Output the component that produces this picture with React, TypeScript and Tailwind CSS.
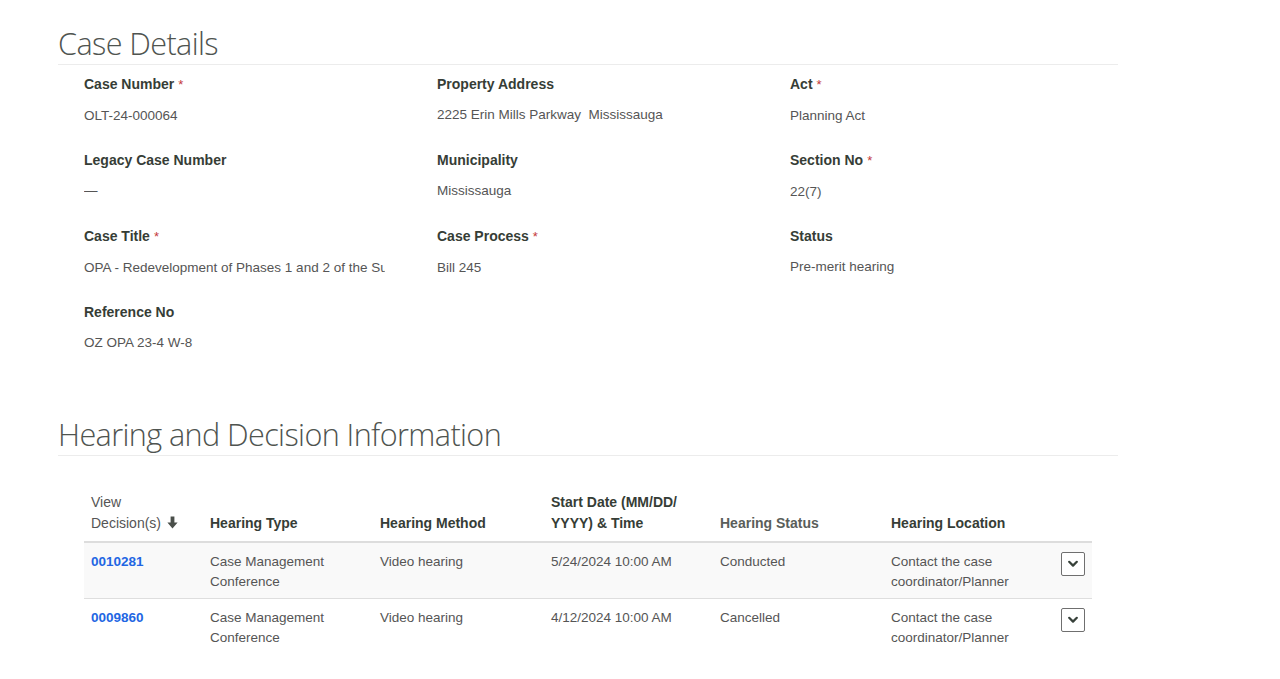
import React from "react";

type Field = { label: string; value: string; required?: boolean };

const fields: Field[][] = [
  [
    { label: "Case Number", value: "OLT-24-000064", required: true },
    { label: "Property Address", value: "2225 Erin Mills Parkway\u00a0\u00a0Mississauga" },
    { label: "Act", value: "Planning Act", required: true },
  ],
  [
    { label: "Legacy Case Number", value: "\u2014" },
    { label: "Municipality", value: "Mississauga" },
    { label: "Section No", value: "22(7)", required: true },
  ],
  [
    { label: "Case Title", value: "OPA - Redevelopment of Phases 1 and 2 of the Su", required: true },
    { label: "Case Process", value: "Bill 245", required: true },
    { label: "Status", value: "Pre-merit hearing" },
  ],
  [{ label: "Reference No", value: "OZ OPA 23-4 W-8" }],
];

const hearings = [
  {
    id: "0010281",
    type: "Case Management Conference",
    method: "Video hearing",
    start: "5/24/2024 10:00 AM",
    status: "Conducted",
    location: "Contact the case coordinator/Planner",
  },
  {
    id: "0009860",
    type: "Case Management Conference",
    method: "Video hearing",
    start: "4/12/2024 10:00 AM",
    status: "Cancelled",
    location: "Contact the case coordinator/Planner",
  },
];

function SectionTitle({ children }: { children: React.ReactNode }) {
  return (
    <div className="border-b border-[#ececec] pb-[1px]">
      <h2 className="font-['Open_Sans',sans-serif] font-light text-[30.6px] leading-[40px] text-[#4f5450] tracking-[-0.6px]">
        {children}
      </h2>
    </div>
  );
}

function FieldCell({ f }: { f: Field }) {
  return (
    <div className="h-[76px] pt-[10px]">
      <div className="text-[14px] leading-[18px] font-bold text-[#363d36]">
        {f.label}
        {f.required && <span className="text-[#c4393a] font-normal text-[13px] ml-[4px]">*</span>}
      </div>
      <div className="mt-[13px] w-[301px] overflow-hidden whitespace-nowrap text-[13.5px] leading-[18px] text-[#555555]">
        {f.value}
      </div>
    </div>
  );
}

function Chevron() {
  return (
    <svg width="10" height="8" viewBox="0 0 10 8" fill="none">
      <path d="M1.2 1.8 L5 5.6 L8.8 1.8" stroke="#37413a" strokeWidth="2.2" strokeLinecap="round" strokeLinejoin="round" />
    </svg>
  );
}

const th = "px-[7px] pb-[7px] text-[14px] leading-[21px] font-bold";
const td = "px-[7px] pt-[9px] pb-[6px]";

export default function App() {
  return (
    <div className="min-h-[679px] bg-white font-['Liberation_Sans',Arial,sans-serif]">
      <div className="ml-[58px] w-[1060px] pt-[23px]">
        <SectionTitle>Case Details</SectionTitle>

        <div className="pl-[26px]">
          {fields.map((row, i) => (
            <div key={i} className="grid grid-cols-[353px_353px_353px]">
              {row.map((f) => (
                <FieldCell key={f.label} f={f} />
              ))}
            </div>
          ))}
        </div>

        <div className="mt-[45px]">
          <SectionTitle>Hearing and Decision Information</SectionTitle>
        </div>

        <div className="pl-[26px] pt-[36px]">
          <table className="w-[1008px] border-collapse table-fixed">
            <colgroup>
              <col className="w-[119px]" />
              <col className="w-[170px]" />
              <col className="w-[171px]" />
              <col className="w-[169px]" />
              <col className="w-[171px]" />
              <col className="w-[170px]" />
              <col className="w-[38px]" />
            </colgroup>
            <thead>
              <tr className="border-b-2 border-[#dddddd] text-left align-bottom">
                <th className={`${th} font-normal text-[#555]`}>
                  View
                  <br />
                  Decision(s)
                  <svg className="inline-block ml-[6px] -mt-[3px]" width="11" height="13" viewBox="0 0 11 13">
                    <path d="M3.6 0.5 H7.4 V6.6 H10.6 L5.5 12.5 L0.4 6.6 H3.6 Z" fill="#4a4f4a" />
                  </svg>
                </th>
                <th className={`${th} text-[#363d36]`}>Hearing Type</th>
                <th className={`${th} text-[#363d36]`}>Hearing Method</th>
                <th className={`${th} text-[#363d36]`}>
                  Start Date (MM/DD/
                  <br />
                  YYYY) &amp; Time
                </th>
                <th className={`${th} text-[#5a5e5a]`}>Hearing Status</th>
                <th className={`${th} text-[#363d36]`}>Hearing Location</th>
                <th />
              </tr>
            </thead>
            <tbody>
              {hearings.map((h, i) => (
                <tr
                  key={h.id}
                  className={`align-top text-[13.5px] leading-[20px] text-[#555555] ${
                    i === 0 ? "bg-[#f9f9f9] border-b border-[#dedede]" : "bg-white"
                  }`}
                >
                  <td className={td}>
                    <a href="#" className="font-bold text-[#2266e3]">
                      {h.id}
                    </a>
                  </td>
                  <td className={`${td} pr-[40px]`}>{h.type}</td>
                  <td className={td}>{h.method}</td>
                  <td className={td}>{h.start}</td>
                  <td className={td}>{h.status}</td>
                  <td className={`${td} pr-[40px]`}>{h.location}</td>
                  <td className={td}>
                    <button className="flex h-[24px] w-[24px] items-center justify-center rounded-[2px] border border-[#6f6f6f] bg-white">
                      <Chevron />
                    </button>
                  </td>
                </tr>
              ))}
            </tbody>
          </table>
        </div>
      </div>
    </div>
  );
}
